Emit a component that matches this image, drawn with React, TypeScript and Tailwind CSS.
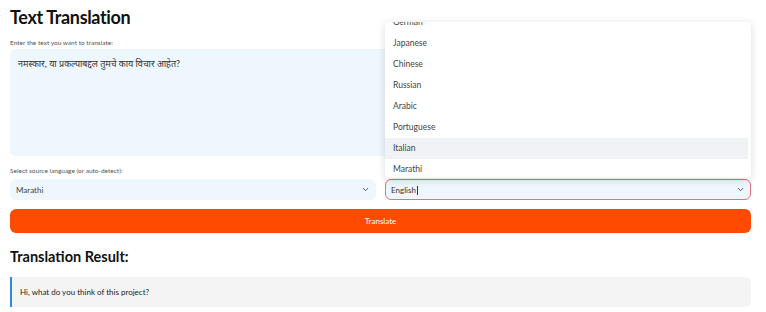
import { ChevronDown } from 'lucide-react'

const languages = ['German', 'Japanese', 'Chinese', 'Russian', 'Arabic', 'Portuguese', 'Italian', 'Marathi']

function App() {
    return (
        <div
            className="relative w-[766px] h-[312px] overflow-hidden bg-white text-[#31333f] pl-[10px] pr-[15px]"
            style={{ fontFamily: 'Lato, "Noto Sans", "Noto Sans Devanagari", sans-serif' }}
        >
            <h1 className="pt-[5px] text-[18px] leading-[24px] font-bold tracking-[-0.02em] text-[#111]">Text Translation</h1>

            <p className="mt-[9px] text-[6.5px] leading-[9px] text-[#555]">Enter the text you want to translate:</p>
            <div className="mt-[2px] h-[107px] rounded-md bg-[#eef6fe] px-[8px] pt-[9px] text-[9px] leading-[12px] text-[#333]">
                नमस्कार, या प्रकल्पाबद्दल तुमचे काय विचार आहेत?
            </div>

            <p className="mt-[10px] text-[6.5px] leading-[9px] text-[#555]">Select source language (or auto-detect):</p>
            <div className="mt-[4px] flex gap-[9px]">
                <div className="flex h-[21px] flex-1 items-center justify-between rounded-md bg-[#eef6fe] px-[6px] text-[8px] text-[#444]">
                    <span>Marathi</span>
                    <ChevronDown size={9} strokeWidth={2.5} className="text-[#444]" />
                </div>
                <div className="flex h-[21px] flex-1 items-center justify-between rounded-md border border-[#e8707a] bg-[#eef6fe] px-[5px] text-[8px] text-[#333]">
                    <span>
                        English<span className="ml-px inline-block h-[9px] w-px bg-[#333] align-middle" />
                    </span>
                    <ChevronDown size={9} strokeWidth={2.5} className="text-[#444]" />
                </div>
            </div>

            <button className="mt-[9px] flex h-[24px] w-full items-center justify-center rounded-md bg-[#ff4b00] text-[8px] text-white">
                Translate
            </button>

            <h2 className="mt-[14px] text-[14.5px] leading-[20px] font-bold text-[#111]">Translation Result:</h2>

            <div className="mt-[10px] flex h-[30px] items-center rounded-r-md border-l-2 border-[#2b8be0] bg-[#f4f4f4] pl-[8px] text-[8px] text-[#222]">
                Hi, what do you think of this project?
            </div>

            {/* open language menu */}
            <div className="absolute left-[385px] top-[22px] h-[156px] w-[366px] overflow-hidden rounded-sm bg-white shadow-[0_2px_8px_rgba(0,0,0,0.15)]">
                <ul className="-mt-[10px] pr-[3px]">
                    {languages.map((lang) => (
                        <li
                            key={lang}
                            className={`flex h-[21px] items-center px-[8px] text-[8.5px] text-[#444] ${
                                lang === 'Italian' ? 'bg-[#f0f2f6]' : ''
                            }`}
                        >
                            {lang}
                        </li>
                    ))}
                </ul>
            </div>
        </div>
    )
}

export default App
